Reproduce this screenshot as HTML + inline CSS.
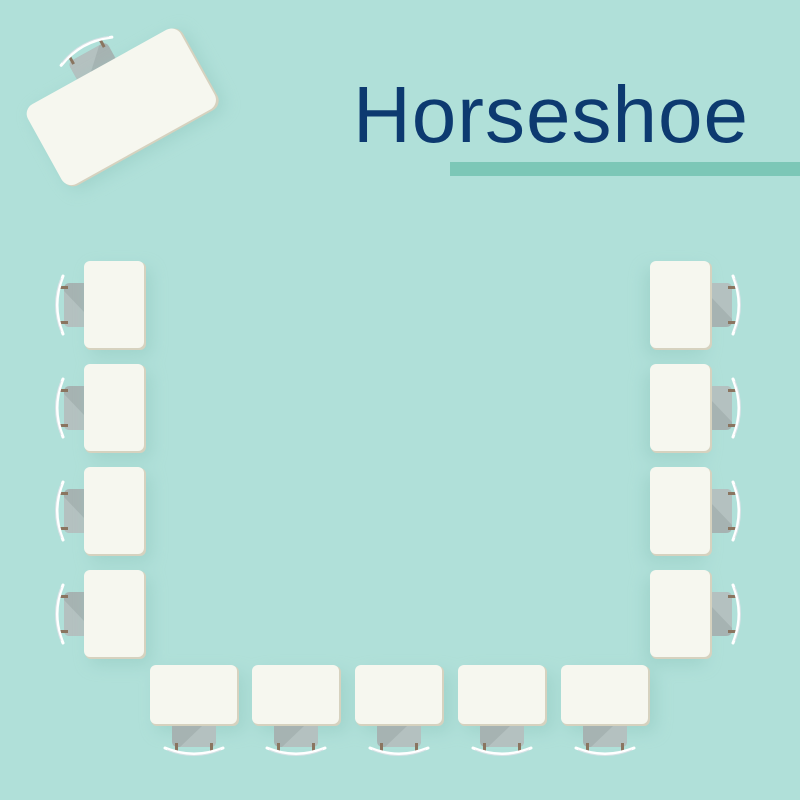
<!DOCTYPE html>
<html><head><meta charset="utf-8"><style>
html,body{margin:0;padding:0;width:800px;height:800px;overflow:hidden;background:#b0e0d9}
</style></head><body>
<svg width="800" height="800" viewBox="0 0 800 800" xmlns="http://www.w3.org/2000/svg" style="position:absolute;left:0;top:0">
<defs>
  <filter id="sh" x="-50%" y="-50%" width="200%" height="200%">
    <feGaussianBlur stdDeviation="8"/>
  </filter>
  <g id="chair">
    <path d="M-22 0 H22 V15 Q22 21 16 21 H-16 Q-22 21 -22 15 Z" fill="#a6b3b2"/>
    <path d="M8 0 H22 V15 Q22 21 16 21 H-14 Z" fill="#b4c1c0"/>
    <rect x="-19" y="17" width="3" height="9" fill="#8a7560"/>
    <rect x="16" y="17" width="3" height="9" fill="#8a7560"/>
    <path d="M-29 22 Q0 34 29 22" stroke="#ffffff" stroke-width="3" fill="none" stroke-linecap="round"/>
    <path d="M-27 24 Q0 35 27 24" stroke="#d8e2e6" stroke-width="1" fill="none"/>
  </g>
</defs>
<rect width="800" height="800" fill="#b0e0d9"/>

<text x="353" y="142" font-family="'Liberation Sans',sans-serif" font-size="80" fill="#0d3a70" textLength="395">Horseshoe</text>
<rect x="450" y="162" width="350" height="14" fill="#7cc7b7"/>

<g transform="translate(122,107) rotate(-29)">
  <use href="#chair" transform="translate(-4,-44) rotate(180)"/>
  <rect x="-84" y="-40" width="176" height="92" rx="11" fill="#95cbc2" opacity="0.6" filter="url(#sh)"/>
  <rect x="-87" y="-45" width="176" height="92" rx="11" fill="#d6d2bf"/>
  <rect x="-88" y="-46" width="175" height="91" rx="11" fill="#f6f7ef"/>
</g>

<g>
  <use href="#chair" transform="translate(85,305) rotate(90)"/>
  <use href="#chair" transform="translate(85,408) rotate(90)"/>
  <use href="#chair" transform="translate(85,511) rotate(90)"/>
  <use href="#chair" transform="translate(85,614) rotate(90)"/>
</g>
<g fill="#95cbc2" opacity="0.6" filter="url(#sh)">
  <rect x="90" y="268" width="61" height="88" rx="6"/>
  <rect x="90" y="371" width="61" height="88" rx="6"/>
  <rect x="90" y="474" width="61" height="88" rx="6"/>
  <rect x="90" y="577" width="61" height="88" rx="6"/>
  <rect x="645" y="268" width="61" height="88" rx="6"/>
  <rect x="645" y="371" width="61" height="88" rx="6"/>
  <rect x="645" y="474" width="61" height="88" rx="6"/>
  <rect x="645" y="577" width="61" height="88" rx="6"/>
  <rect x="156" y="672" width="88" height="60" rx="6"/>
  <rect x="259" y="672" width="88" height="60" rx="6"/>
  <rect x="362" y="672" width="88" height="60" rx="6"/>
  <rect x="465" y="672" width="88" height="60" rx="6"/>
  <rect x="568" y="672" width="88" height="60" rx="6"/>
</g>
<g>
  <use href="#chair" transform="translate(711,305) rotate(-90)"/>
  <use href="#chair" transform="translate(711,408) rotate(-90)"/>
  <use href="#chair" transform="translate(711,511) rotate(-90)"/>
  <use href="#chair" transform="translate(711,614) rotate(-90)"/>
  <use href="#chair" transform="translate(194,726)"/>
  <use href="#chair" transform="translate(296,726)"/>
  <use href="#chair" transform="translate(399,726)"/>
  <use href="#chair" transform="translate(502,726)"/>
  <use href="#chair" transform="translate(605,726)"/>
</g>
<g>
  <g fill="#d6d2bf">
    <rect x="85" y="262" width="61" height="88" rx="6"/>
    <rect x="85" y="365" width="61" height="88" rx="6"/>
    <rect x="85" y="468" width="61" height="88" rx="6"/>
    <rect x="85" y="571" width="61" height="88" rx="6"/>
    <rect x="651" y="262" width="61" height="88" rx="6"/>
    <rect x="651" y="365" width="61" height="88" rx="6"/>
    <rect x="651" y="468" width="61" height="88" rx="6"/>
    <rect x="651" y="571" width="61" height="88" rx="6"/>
    <rect x="151" y="666" width="88" height="60" rx="6"/>
    <rect x="253" y="666" width="88" height="60" rx="6"/>
    <rect x="356" y="666" width="88" height="60" rx="6"/>
    <rect x="459" y="666" width="88" height="60" rx="6"/>
    <rect x="562" y="666" width="88" height="60" rx="6"/>
  </g>
  <g fill="#f6f7ef">
    <rect x="84" y="261" width="60" height="87" rx="6"/>
    <rect x="84" y="364" width="60" height="87" rx="6"/>
    <rect x="84" y="467" width="60" height="87" rx="6"/>
    <rect x="84" y="570" width="60" height="87" rx="6"/>
    <rect x="650" y="261" width="60" height="87" rx="6"/>
    <rect x="650" y="364" width="60" height="87" rx="6"/>
    <rect x="650" y="467" width="60" height="87" rx="6"/>
    <rect x="650" y="570" width="60" height="87" rx="6"/>
    <rect x="150" y="665" width="87" height="59" rx="6"/>
    <rect x="252" y="665" width="87" height="59" rx="6"/>
    <rect x="355" y="665" width="87" height="59" rx="6"/>
    <rect x="458" y="665" width="87" height="59" rx="6"/>
    <rect x="561" y="665" width="87" height="59" rx="6"/>
  </g>
</g>
</svg>
</body></html>
